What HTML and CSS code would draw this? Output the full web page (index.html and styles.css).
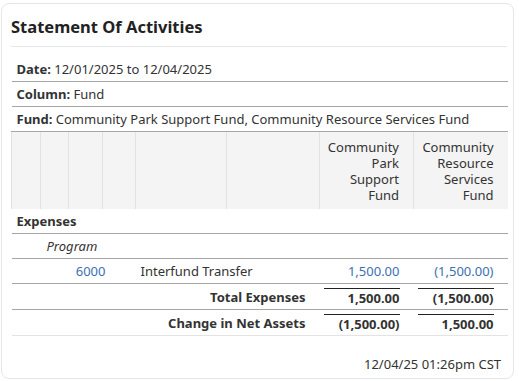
FILE: index.html
```html
<!DOCTYPE html>
<html>
<head>
<meta charset="utf-8">
<link rel="stylesheet" href="styles.css">
</head>
<body>
<div class="card">
  <h1 class="title">Statement Of Activities</h1>
  <div class="sep"></div>
  <table class="report">
    <colgroup>
      <col style="width:29px"><col style="width:28px"><col style="width:34px"><col style="width:33px">
      <col style="width:91px"><col style="width:93px"><col style="width:94px"><col style="width:94px">
    </colgroup>
    <tbody>
      <tr class="info"><td colspan="8"><b>Date:</b> 12/01/2025 to 12/04/2025</td></tr>
      <tr class="info"><td colspan="8"><b>Column:</b> Fund</td></tr>
      <tr class="info"><td colspan="8"><b>Fund:</b> Community Park Support Fund, Community Resource Services Fund</td></tr>
      <tr class="head">
        <th></th><th></th><th></th><th></th><th></th><th></th>
        <th class="num"><div class="hl">Community</div><div class="hl">Park</div><div class="hl">Support</div><div class="hl">Fund</div></th>
        <th class="num"><div class="hl">Community</div><div class="hl">Resource</div><div class="hl">Services</div><div class="hl">Fund</div></th>
      </tr>
      <tr class="section"><td colspan="8">Expenses</td></tr>
      <tr class="group"><td colspan="8">Program</td></tr>
      <tr class="line">
        <td colspan="4" class="acct">6000</td>
        <td colspan="2" class="desc">Interfund Transfer</td>
        <td class="num link">1,500.00</td>
        <td class="num link">(1,500.00)</td>
      </tr>
      <tr class="total">
        <td colspan="6" class="label">Total Expenses</td>
        <td class="num"><div class="over">1,500.00</div></td>
        <td class="num"><div class="over">(1,500.00)</div></td>
      </tr>
      <tr class="total last">
        <td colspan="6" class="label">Change in Net Assets</td>
        <td class="num"><div class="over">(1,500.00)</div></td>
        <td class="num"><div class="over">1,500.00</div></td>
      </tr>
    </tbody>
  </table>
  <div class="stamp">12/04/25 01:26pm CST</div>
</div>
</body>
</html>
```
FILE: styles.css
```css
html, body {
  margin: 0;
  padding: 0;
  background: #fff;
}
body {
  font-family: "Noto Sans", "Open Sans", sans-serif;
  font-size: 13px;
  color: #333;
}
.card {
  box-sizing: border-box;
  margin: 3px 0 0 1px;
  width: 513px;
  height: 376px;
  border: 1px solid #e3e6ea;
  border-radius: 8px;
}
.title {
  margin: 0;
  padding: 11px 0 0 9px;
  font-size: 16.5px;
  font-weight: 700;
  line-height: 24px;
  height: 31px;
  color: #222;
}
.sep {
  margin: 0 6px 0 9px;
  border-top: 1px solid #e4e8ee;
  height: 10px;
}
.report {
  margin-left: 9px;
  width: 496px;
  border-collapse: collapse;
  table-layout: fixed;
}
.report td, .report th {
  padding: 0;
  line-height: 16px;
}
.info td {
  padding: 4px 5px 4px 5px;
  border-bottom: 1px solid #a6a6a6;
}
.info b { font-weight: 700; }
.head th {
  background: #f4f4f4;
  border-left: 1px solid #e2e2e2;
  font-weight: 400;
  padding: 7px 0 6px;
  height: 64px;
  vertical-align: top;
}
.hl {
  height: 16px;
  line-height: 16px;
  white-space: nowrap;
}
.head th.num {
  text-align: right;
}
.section td {
  font-weight: 700;
  padding: 4px 5px 4px;
  border-bottom: 1px solid #a6a6a6;
}
.group td {
  font-style: italic;
  padding: 4px 5px 4px 35px;
  border-bottom: 1px solid #a6a6a6;
}
.line td {
  padding: 4px 0;
  border-bottom: 1px solid #a6a6a6;
}
.line .acct {
  text-align: right;
  padding-right: 30px;
  color: #3b6fb3;
}
.line .desc {
  padding-left: 5px;
}
.report .num {
  text-align: right;
  padding-right: 14px;
  padding-left: 4px;
}
.link { color: #3b6fb3; }
.total td {
  font-weight: 700;
  padding-top: 4px;
  padding-bottom: 3px;
  border-bottom: 1px solid #a6a6a6;
  vertical-align: top;
}
.total.last td {
  border-bottom-color: #e3e3e3;
}
.total .label {
  text-align: right;
  padding-right: 14px;
  padding-top: 5px;
}
.over {
  border-top: 1px solid #222;
  padding-top: 1px;
  line-height: 16px;
}
.stamp {
  text-align: right;
  padding: 20px 12px 0 0;
  line-height: 16px;
}
```
